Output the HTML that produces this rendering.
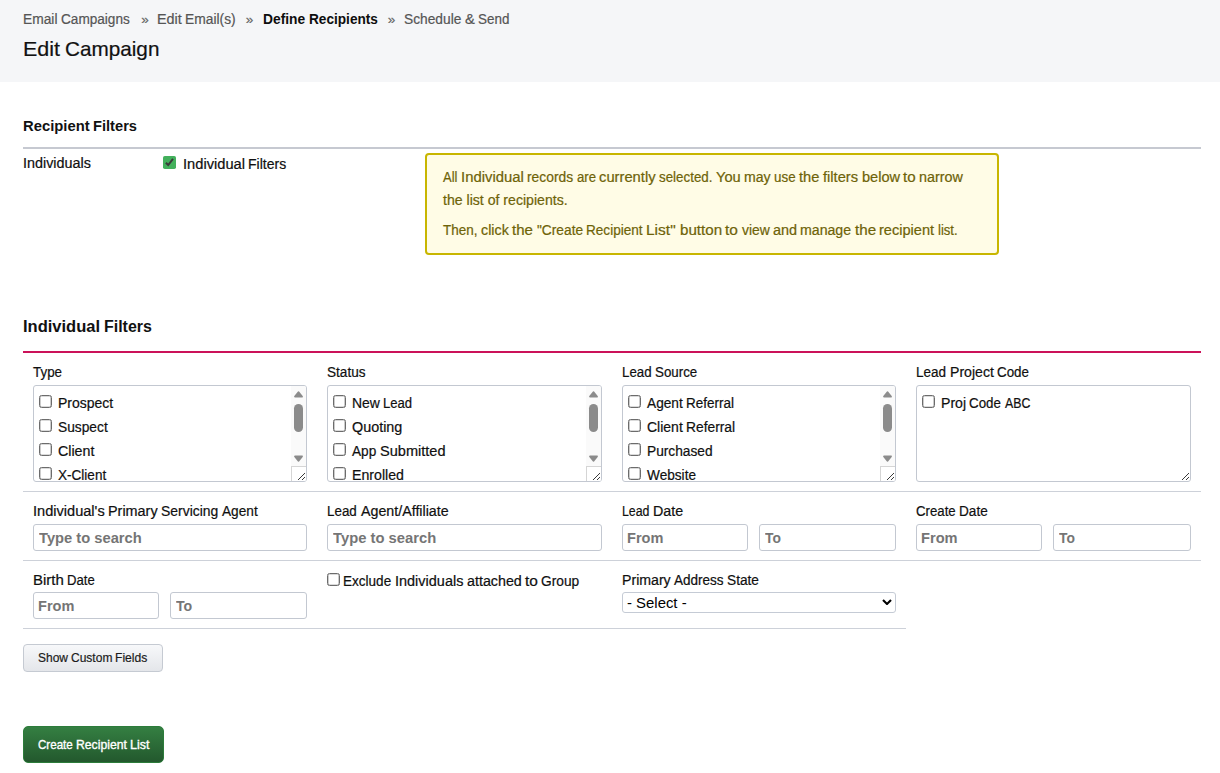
<!DOCTYPE html>
<html lang="en">
<head>
<meta charset="utf-8">
<title>Edit Campaign</title>
<style>
*{box-sizing:border-box;margin:0;padding:0}
html,body{width:1220px;height:773px;overflow:hidden;background:#fff}
body{font-family:"Liberation Sans",sans-serif;color:#1b1b1b;position:relative}
.t{position:absolute;white-space:nowrap;line-height:20px;transform-origin:0 0;-webkit-text-stroke:0.2px currentColor}
.hdr{position:absolute;left:0;top:0;width:1220px;height:81.7px;background:#f5f6f8}
.ln{position:absolute;height:1px;background:#cdd1d9}
.box{position:absolute;width:274px;height:97px;top:385px;border:1px solid #c3c8d1;border-radius:3px;background:#fff;overflow:hidden}
.cb{position:absolute;width:13px;height:13px;border:1px solid #6c6c6c;border-radius:2.5px;background:#fff;box-shadow:inset 0 0 0 0.35px #6c6c6c}
.inp{position:absolute;height:27px;border:1px solid #c3c8d1;border-radius:3px;background:#fff}
.sb{position:absolute;right:0;top:0;width:15px;height:95px;background:#fafafa}
.sb svg.up{position:absolute;left:2px;top:4px;width:11px;height:9px}
.sb svg.dn{position:absolute;left:2px;top:68px;width:11px;height:9px}
.sb .th{position:absolute;left:3px;top:18px;width:9px;height:28px;border-radius:4.5px;background:#8b8b8b}
.sb .rz{position:absolute;left:0;top:80px;width:15px;height:15px;background:#fff;border-left:1px solid #d5d5d5;border-top:1px solid #d5d5d5}
.rzs{position:absolute;right:1px;bottom:1px;width:7px;height:7px}
.btn{position:absolute;left:23px;top:644px;width:140px;height:28px;border:1px solid #c5cad2;border-radius:4px;background:linear-gradient(#f7f8fa,#e4e6ea)}
.btng{position:absolute;left:23px;top:726px;width:141px;height:37px;border:1px solid #2c7c3a;border-radius:5px;background:linear-gradient(#347f42,#23582d)}
.sel{position:absolute;left:622px;top:592px;width:274px;height:21px;border:1px solid #c5cbd5;border-radius:3px;background:#fff}
</style>
</head>
<body>
<div class="hdr"></div>
<div class="ln" style="left:23px;top:147px;width:1178px;height:2px;background:#c6c9d1"></div>
<svg style="position:absolute;left:163px;top:156px" width="13" height="13" viewBox="0 0 13 13"><rect x="0" y="0" width="13" height="13" rx="1.8" fill="#43b05c"/><path d="M2.9 6.7 L5.2 9.0 L10 2.8" fill="none" stroke="#3b3b3b" stroke-width="2"/></svg>
<div style="position:absolute;left:425px;top:153px;width:574px;height:102px;border:2px solid #c8b600;border-radius:4px;background:#fffce6"></div>
<div class="ln" style="left:23px;top:351px;width:1178px;height:2px;background:#cb1259"></div>
<div class="box" style="left:33px;width:274px"><div class="cb" style="left:5px;top:9px"></div><div class="cb" style="left:5px;top:33px"></div><div class="cb" style="left:5px;top:57px"></div><div class="cb" style="left:5px;top:81px"></div><div class="sb"><svg class="up" viewBox="0 0 11 9"><path d="M2.1 6.6 L5.5 2.3 L8.9 6.6 Z" fill="#8b8b8b" stroke="#8b8b8b" stroke-width="2" stroke-linejoin="round"/></svg><div class="th"></div><svg class="dn" viewBox="0 0 11 9"><path d="M2.1 2.4 L5.5 6.7 L8.9 2.4 Z" fill="#8b8b8b" stroke="#8b8b8b" stroke-width="2" stroke-linejoin="round"/></svg><div class="rz"><svg class="rzs" viewBox="0 0 7 7"><path d="M0 7 L7 0 M4 7 L7 4" stroke="#3a3a3a" stroke-width="1" fill="none"/></svg></div></div></div>
<div class="box" style="left:327px;width:275px"><div class="cb" style="left:5px;top:9px"></div><div class="cb" style="left:5px;top:33px"></div><div class="cb" style="left:5px;top:57px"></div><div class="cb" style="left:5px;top:81px"></div><div class="sb"><svg class="up" viewBox="0 0 11 9"><path d="M2.1 6.6 L5.5 2.3 L8.9 6.6 Z" fill="#8b8b8b" stroke="#8b8b8b" stroke-width="2" stroke-linejoin="round"/></svg><div class="th"></div><svg class="dn" viewBox="0 0 11 9"><path d="M2.1 2.4 L5.5 6.7 L8.9 2.4 Z" fill="#8b8b8b" stroke="#8b8b8b" stroke-width="2" stroke-linejoin="round"/></svg><div class="rz"><svg class="rzs" viewBox="0 0 7 7"><path d="M0 7 L7 0 M4 7 L7 4" stroke="#3a3a3a" stroke-width="1" fill="none"/></svg></div></div></div>
<div class="box" style="left:622px;width:274px"><div class="cb" style="left:5px;top:9px"></div><div class="cb" style="left:5px;top:33px"></div><div class="cb" style="left:5px;top:57px"></div><div class="cb" style="left:5px;top:81px"></div><div class="sb"><svg class="up" viewBox="0 0 11 9"><path d="M2.1 6.6 L5.5 2.3 L8.9 6.6 Z" fill="#8b8b8b" stroke="#8b8b8b" stroke-width="2" stroke-linejoin="round"/></svg><div class="th"></div><svg class="dn" viewBox="0 0 11 9"><path d="M2.1 2.4 L5.5 6.7 L8.9 2.4 Z" fill="#8b8b8b" stroke="#8b8b8b" stroke-width="2" stroke-linejoin="round"/></svg><div class="rz"><svg class="rzs" viewBox="0 0 7 7"><path d="M0 7 L7 0 M4 7 L7 4" stroke="#3a3a3a" stroke-width="1" fill="none"/></svg></div></div></div>
<div class="box" style="left:916px;width:275px"><div class="cb" style="left:5px;top:9px"></div><svg class="rzs" viewBox="0 0 7 7"><path d="M0 7 L7 0 M4 7 L7 4" stroke="#3a3a3a" stroke-width="1" fill="none"/></svg></div>
<div class="ln" style="left:23px;top:491px;width:1178px"></div>
<div class="ln" style="left:23px;top:560px;width:1178px"></div>
<div class="ln" style="left:23px;top:628px;width:883px"></div>
<div class="inp" style="left:33px;top:524px;width:274px"></div>
<div class="inp" style="left:327px;top:524px;width:275px"></div>
<div class="inp" style="left:622px;top:524px;width:126px"></div>
<div class="inp" style="left:759px;top:524px;width:137px"></div>
<div class="inp" style="left:916px;top:524px;width:126px"></div>
<div class="inp" style="left:1053px;top:524px;width:138px"></div>
<div class="inp" style="left:33px;top:592px;width:126px"></div>
<div class="inp" style="left:170px;top:592px;width:137px"></div>
<div class="cb" style="left:327px;top:573px"></div>
<div class="sel"><svg style="position:absolute;left:259px;top:6px" width="10" height="6" viewBox="0 0 10 6"><path d="M1 1 L5 5 L9 1" fill="none" stroke="#000" stroke-width="2.1"/></svg></div>
<div class="btn"></div>
<div class="btng"></div>

<span class="t" style="left:23.20px;top:9.20px;font-size:14.75px;font-weight:normal;color:#555;transform:scaleX(0.9353)">Email</span>
<span class="t" style="left:61.30px;top:9.20px;font-size:14.75px;font-weight:normal;color:#555;transform:scaleX(0.9219)">Campaigns</span>
<span class="t" style="left:141.23px;top:9.60px;font-size:13.5px;font-weight:normal;color:#666;transform:scaleX(1.0000)">»</span>
<span class="t" style="left:157.01px;top:9.20px;font-size:14.75px;font-weight:normal;color:#555;transform:scaleX(0.9756)">Edit</span>
<span class="t" style="left:185.41px;top:9.20px;font-size:14.75px;font-weight:normal;color:#555;transform:scaleX(0.9370)">Email(s)</span>
<span class="t" style="left:245.73px;top:9.60px;font-size:13.5px;font-weight:normal;color:#666;transform:scaleX(1.0000)">»</span>
<span class="t" style="left:262.90px;top:9.20px;font-size:14.75px;font-weight:bold;color:#0d0d0d;transform:scaleX(0.9359);-webkit-text-stroke:0">Define</span>
<span class="t" style="left:308.70px;top:9.20px;font-size:14.75px;font-weight:bold;color:#0d0d0d;transform:scaleX(0.9235);-webkit-text-stroke:0">Recipients</span>
<span class="t" style="left:387.73px;top:9.60px;font-size:13.5px;font-weight:normal;color:#666;transform:scaleX(1.0000)">»</span>
<span class="t" style="left:404.00px;top:9.20px;font-size:14.75px;font-weight:normal;color:#555;transform:scaleX(0.9331)">Schedule</span>
<span class="t" style="left:465.00px;top:9.20px;font-size:14.75px;font-weight:normal;color:#555;transform:scaleX(1.0000)">&amp;</span>
<span class="t" style="left:477.70px;top:9.20px;font-size:14.75px;font-weight:normal;color:#555;transform:scaleX(0.9109)">Send</span>
<span class="t" style="left:23.09px;top:39.10px;font-size:20.4px;font-weight:normal;color:#111;transform:scaleX(1.0534)">Edit</span>
<span class="t" style="left:64.89px;top:39.10px;font-size:20.4px;font-weight:normal;color:#111;transform:scaleX(1.0158)">Campaign</span>
<span class="t" style="left:23.00px;top:116.00px;font-size:14.9px;font-weight:bold;color:#111;transform:scaleX(0.9946);-webkit-text-stroke:0">Recipient</span>
<span class="t" style="left:93.30px;top:116.00px;font-size:14.9px;font-weight:bold;color:#111;transform:scaleX(0.9845);-webkit-text-stroke:0">Filters</span>
<span class="t" style="left:23.12px;top:153.10px;font-size:13.85px;font-weight:normal;color:#101010;transform:scaleX(1.0384)">Individuals</span>
<span class="t" style="left:182.92px;top:154.10px;font-size:13.85px;font-weight:normal;color:#101010;transform:scaleX(1.0597)">Individual</span>
<span class="t" style="left:248.32px;top:154.10px;font-size:13.85px;font-weight:normal;color:#101010;transform:scaleX(1.0118)">Filters</span>
<span class="t" style="left:443.42px;top:167.00px;font-size:13.85px;font-weight:normal;color:#6e6308;transform:scaleX(0.9351)">All</span>
<span class="t" style="left:461.22px;top:167.00px;font-size:13.85px;font-weight:normal;color:#6e6308;transform:scaleX(1.0734)">Individual</span>
<span class="t" style="left:527.42px;top:167.00px;font-size:13.85px;font-weight:normal;color:#6e6308;transform:scaleX(0.9983)">records</span>
<span class="t" style="left:576.92px;top:167.00px;font-size:13.85px;font-weight:normal;color:#6e6308;transform:scaleX(0.9538)">are</span>
<span class="t" style="left:599.42px;top:167.00px;font-size:13.85px;font-weight:normal;color:#6e6308;transform:scaleX(1.0659)">currently</span>
<span class="t" style="left:659.42px;top:167.00px;font-size:13.85px;font-weight:normal;color:#6e6308;transform:scaleX(0.9652)">selected.</span>
<span class="t" style="left:716.32px;top:167.00px;font-size:13.85px;font-weight:normal;color:#6e6308;transform:scaleX(1.0563)">You</span>
<span class="t" style="left:744.42px;top:167.00px;font-size:13.85px;font-weight:normal;color:#6e6308;transform:scaleX(1.0166)">may</span>
<span class="t" style="left:774.42px;top:167.00px;font-size:13.85px;font-weight:normal;color:#6e6308;transform:scaleX(0.9670)">use</span>
<span class="t" style="left:799.42px;top:167.00px;font-size:13.85px;font-weight:normal;color:#6e6308;transform:scaleX(1.0593)">the</span>
<span class="t" style="left:823.22px;top:167.00px;font-size:13.85px;font-weight:normal;color:#6e6308;transform:scaleX(1.0609)">filters</span>
<span class="t" style="left:861.72px;top:167.00px;font-size:13.85px;font-weight:normal;color:#6e6308;transform:scaleX(1.0531)">below</span>
<span class="t" style="left:903.22px;top:167.00px;font-size:13.85px;font-weight:normal;color:#6e6308;transform:scaleX(1.0905)">to</span>
<span class="t" style="left:919.22px;top:167.00px;font-size:13.85px;font-weight:normal;color:#6e6308;transform:scaleX(1.0355)">narrow</span>
<span class="t" style="left:443.42px;top:189.50px;font-size:13.85px;font-weight:normal;color:#6e6308;transform:scaleX(1.0187)">the list of recipients.</span>
<span class="t" style="left:443.42px;top:219.50px;font-size:13.85px;font-weight:normal;color:#6e6308;transform:scaleX(0.9713)">Then,</span>
<span class="t" style="left:481.22px;top:219.50px;font-size:13.85px;font-weight:normal;color:#6e6308;transform:scaleX(1.0323)">click</span>
<span class="t" style="left:512.42px;top:219.50px;font-size:13.85px;font-weight:normal;color:#6e6308;transform:scaleX(1.0853)">the</span>
<span class="t" style="left:536.72px;top:219.50px;font-size:13.85px;font-weight:normal;color:#6e6308;transform:scaleX(0.9919)">"Create</span>
<span class="t" style="left:586.22px;top:219.50px;font-size:13.85px;font-weight:normal;color:#6e6308;transform:scaleX(0.9805)">Recipient</span>
<span class="t" style="left:646.22px;top:219.50px;font-size:13.85px;font-weight:normal;color:#6e6308;transform:scaleX(1.1200)">List"</span>
<span class="t" style="left:679.92px;top:219.50px;font-size:13.85px;font-weight:normal;color:#6e6308;transform:scaleX(1.0933)">button</span>
<span class="t" style="left:725.42px;top:219.50px;font-size:13.85px;font-weight:normal;color:#6e6308;transform:scaleX(1.1164)">to</span>
<span class="t" style="left:741.72px;top:219.50px;font-size:13.85px;font-weight:normal;color:#6e6308;transform:scaleX(1.0032)">view</span>
<span class="t" style="left:772.92px;top:219.50px;font-size:13.85px;font-weight:normal;color:#6e6308;transform:scaleX(1.0425)">and</span>
<span class="t" style="left:800.42px;top:219.50px;font-size:13.85px;font-weight:normal;color:#6e6308;transform:scaleX(1.0212)">manage</span>
<span class="t" style="left:854.92px;top:219.50px;font-size:13.85px;font-weight:normal;color:#6e6308;transform:scaleX(1.0957)">the</span>
<span class="t" style="left:879.42px;top:219.50px;font-size:13.85px;font-weight:normal;color:#6e6308;transform:scaleX(1.0528)">recipient</span>
<span class="t" style="left:937.92px;top:219.50px;font-size:13.85px;font-weight:normal;color:#6e6308;transform:scaleX(0.9454)">list.</span>
<span class="t" style="left:23.27px;top:315.50px;font-size:16.3px;font-weight:bold;color:#111;transform:scaleX(1.0142);-webkit-text-stroke:0">Individual</span>
<span class="t" style="left:104.27px;top:315.50px;font-size:16.3px;font-weight:bold;color:#111;transform:scaleX(0.9796);-webkit-text-stroke:0">Filters</span>
<span class="t" style="left:33.02px;top:361.60px;font-size:13.85px;font-weight:normal;color:#101010;transform:scaleX(0.9672)">Type</span>
<span class="t" style="left:327.42px;top:361.60px;font-size:13.85px;font-weight:normal;color:#101010;transform:scaleX(0.9817)">Status</span>
<span class="t" style="left:622.22px;top:361.60px;font-size:13.85px;font-weight:normal;color:#101010;transform:scaleX(0.9604)">Lead</span>
<span class="t" style="left:655.22px;top:361.60px;font-size:13.85px;font-weight:normal;color:#101010;transform:scaleX(0.9625)">Source</span>
<span class="t" style="left:916.32px;top:361.60px;font-size:13.85px;font-weight:normal;color:#101010;transform:scaleX(0.9766)">Lead</span>
<span class="t" style="left:949.82px;top:361.60px;font-size:13.85px;font-weight:normal;color:#101010;transform:scaleX(1.0185)">Project</span>
<span class="t" style="left:997.12px;top:361.60px;font-size:13.85px;font-weight:normal;color:#101010;transform:scaleX(0.9644)">Code</span>
<span class="t" style="left:57.62px;top:392.60px;font-size:13.85px;font-weight:normal;color:#101010;transform:scaleX(1.0108)">Prospect</span>
<span class="t" style="left:57.62px;top:416.60px;font-size:13.85px;font-weight:normal;color:#101010;transform:scaleX(0.9940)">Suspect</span>
<span class="t" style="left:57.62px;top:440.60px;font-size:13.85px;font-weight:normal;color:#101010;transform:scaleX(1.0289)">Client</span>
<span class="t" style="left:57.62px;top:464.60px;font-size:13.85px;font-weight:normal;color:#101010;transform:scaleX(0.9793)">X-Client</span>
<span class="t" style="left:352.12px;top:392.60px;font-size:13.85px;font-weight:normal;color:#101010;transform:scaleX(1.0068)">New</span>
<span class="t" style="left:383.42px;top:392.60px;font-size:13.85px;font-weight:normal;color:#101010;transform:scaleX(0.9454)">Lead</span>
<span class="t" style="left:352.12px;top:416.60px;font-size:13.85px;font-weight:normal;color:#101010;transform:scaleX(1.0378)">Quoting</span>
<span class="t" style="left:352.12px;top:440.60px;font-size:13.85px;font-weight:normal;color:#101010;transform:scaleX(0.9858)">App</span>
<span class="t" style="left:379.82px;top:440.60px;font-size:13.85px;font-weight:normal;color:#101010;transform:scaleX(1.0511)">Submitted</span>
<span class="t" style="left:352.12px;top:464.60px;font-size:13.85px;font-weight:normal;color:#101010;transform:scaleX(1.0223)">Enrolled</span>
<span class="t" style="left:646.62px;top:392.60px;font-size:13.85px;font-weight:normal;color:#101010;transform:scaleX(0.9891)">Agent</span>
<span class="t" style="left:685.82px;top:392.60px;font-size:13.85px;font-weight:normal;color:#101010;transform:scaleX(0.9732)">Referral</span>
<span class="t" style="left:646.62px;top:416.60px;font-size:13.85px;font-weight:normal;color:#101010;transform:scaleX(1.0109)">Client</span>
<span class="t" style="left:685.82px;top:416.60px;font-size:13.85px;font-weight:normal;color:#101010;transform:scaleX(0.9976)">Referral</span>
<span class="t" style="left:646.62px;top:440.60px;font-size:13.85px;font-weight:normal;color:#101010;transform:scaleX(0.9916)">Purchased</span>
<span class="t" style="left:646.62px;top:464.60px;font-size:13.85px;font-weight:normal;color:#101010;transform:scaleX(0.9852)">Website</span>
<span class="t" style="left:940.92px;top:392.60px;font-size:13.85px;font-weight:normal;color:#101010;transform:scaleX(1.0189)">Proj</span>
<span class="t" style="left:969.42px;top:392.60px;font-size:13.85px;font-weight:normal;color:#101010;transform:scaleX(0.9632)">Code</span>
<span class="t" style="left:1004.72px;top:392.60px;font-size:13.85px;font-weight:normal;color:#101010;transform:scaleX(0.8898)">ABC</span>
<span class="t" style="left:33.02px;top:501.00px;font-size:13.85px;font-weight:normal;color:#101010;transform:scaleX(1.0533)">Individual's</span>
<span class="t" style="left:108.12px;top:501.00px;font-size:13.85px;font-weight:normal;color:#101010;transform:scaleX(1.0399)">Primary</span>
<span class="t" style="left:161.12px;top:501.00px;font-size:13.85px;font-weight:normal;color:#101010;transform:scaleX(1.0062)">Servicing</span>
<span class="t" style="left:221.82px;top:501.00px;font-size:13.85px;font-weight:normal;color:#101010;transform:scaleX(0.9874)">Agent</span>
<span class="t" style="left:327.42px;top:501.00px;font-size:13.85px;font-weight:normal;color:#101010;transform:scaleX(0.9669)">Lead</span>
<span class="t" style="left:360.62px;top:501.00px;font-size:13.85px;font-weight:normal;color:#101010;transform:scaleX(1.0295)">Agent/Affiliate</span>
<span class="t" style="left:622.22px;top:501.00px;font-size:13.85px;font-weight:normal;color:#101010;transform:scaleX(0.8922)">Lead</span>
<span class="t" style="left:653.12px;top:501.00px;font-size:13.85px;font-weight:normal;color:#101010;transform:scaleX(1.0318)">Date</span>
<span class="t" style="left:916.22px;top:501.00px;font-size:13.85px;font-weight:normal;color:#101010;transform:scaleX(0.9550)">Create</span>
<span class="t" style="left:959.32px;top:501.00px;font-size:13.85px;font-weight:normal;color:#101010;transform:scaleX(0.9823)">Date</span>
<span class="t" style="left:33.02px;top:569.50px;font-size:13.85px;font-weight:normal;color:#101010;transform:scaleX(1.0851)">Birth</span>
<span class="t" style="left:67.32px;top:569.50px;font-size:13.85px;font-weight:normal;color:#101010;transform:scaleX(0.9481)">Date</span>
<span class="t" style="left:343.22px;top:571.00px;font-size:13.85px;font-weight:normal;color:#101010;transform:scaleX(0.9782)">Exclude</span>
<span class="t" style="left:394.82px;top:571.00px;font-size:13.85px;font-weight:normal;color:#101010;transform:scaleX(1.0454)">Individuals</span>
<span class="t" style="left:466.62px;top:571.00px;font-size:13.85px;font-weight:normal;color:#101010;transform:scaleX(1.0314)">attached</span>
<span class="t" style="left:524.82px;top:571.00px;font-size:13.85px;font-weight:normal;color:#101010;transform:scaleX(1.1164)">to</span>
<span class="t" style="left:541.12px;top:571.00px;font-size:13.85px;font-weight:normal;color:#101010;transform:scaleX(0.9921)">Group</span>
<span class="t" style="left:622.22px;top:569.50px;font-size:13.85px;font-weight:normal;color:#101010;transform:scaleX(1.0211)">Primary</span>
<span class="t" style="left:674.32px;top:569.50px;font-size:13.85px;font-weight:normal;color:#101010;transform:scaleX(0.9763)">Address</span>
<span class="t" style="left:727.32px;top:569.50px;font-size:13.85px;font-weight:normal;color:#101010;transform:scaleX(0.9893)">State</span>
<span class="t" style="left:38.60px;top:528.00px;font-size:15px;font-weight:bold;color:#757575;transform:scaleX(0.9808);-webkit-text-stroke:0">Type to search</span>
<span class="t" style="left:332.90px;top:528.00px;font-size:15px;font-weight:bold;color:#757575;transform:scaleX(0.9851);-webkit-text-stroke:0">Type to search</span>
<span class="t" style="left:626.70px;top:528.00px;font-size:15px;font-weight:bold;color:#757575;transform:scaleX(0.9707);-webkit-text-stroke:0">From</span>
<span class="t" style="left:764.70px;top:528.00px;font-size:15px;font-weight:bold;color:#757575;transform:scaleX(0.9234);-webkit-text-stroke:0">To</span>
<span class="t" style="left:921.00px;top:528.00px;font-size:15px;font-weight:bold;color:#757575;transform:scaleX(0.9760);-webkit-text-stroke:0">From</span>
<span class="t" style="left:1059.20px;top:528.00px;font-size:15px;font-weight:bold;color:#757575;transform:scaleX(0.9234);-webkit-text-stroke:0">To</span>
<span class="t" style="left:38.00px;top:595.50px;font-size:15px;font-weight:bold;color:#757575;transform:scaleX(0.9693);-webkit-text-stroke:0">From</span>
<span class="t" style="left:175.60px;top:595.50px;font-size:15px;font-weight:bold;color:#757575;transform:scaleX(0.9437);-webkit-text-stroke:0">To</span>
<span class="t" style="left:626.50px;top:593.00px;font-size:15px;font-weight:normal;color:#000;transform:scaleX(0.9931);-webkit-text-stroke:0">- Select -</span>
<span class="t" style="left:37.54px;top:648.10px;font-size:12.9px;font-weight:normal;color:#1b1b1b;transform:scaleX(0.9300)">Show</span>
<span class="t" style="left:70.74px;top:648.10px;font-size:12.9px;font-weight:normal;color:#1b1b1b;transform:scaleX(0.9318)">Custom</span>
<span class="t" style="left:115.34px;top:648.10px;font-size:12.9px;font-weight:normal;color:#1b1b1b;transform:scaleX(0.9414)">Fields</span>
<span class="t" style="left:37.54px;top:735.30px;font-size:12.9px;font-weight:normal;color:#fff;transform:scaleX(0.8989);-webkit-text-stroke:0.35px #fff">Create</span>
<span class="t" style="left:75.54px;top:735.30px;font-size:12.9px;font-weight:normal;color:#fff;transform:scaleX(0.9468);-webkit-text-stroke:0.35px #fff">Recipient</span>
<span class="t" style="left:129.64px;top:735.30px;font-size:12.9px;font-weight:normal;color:#fff;transform:scaleX(0.9657);-webkit-text-stroke:0.35px #fff">List</span>
</body>
</html>
